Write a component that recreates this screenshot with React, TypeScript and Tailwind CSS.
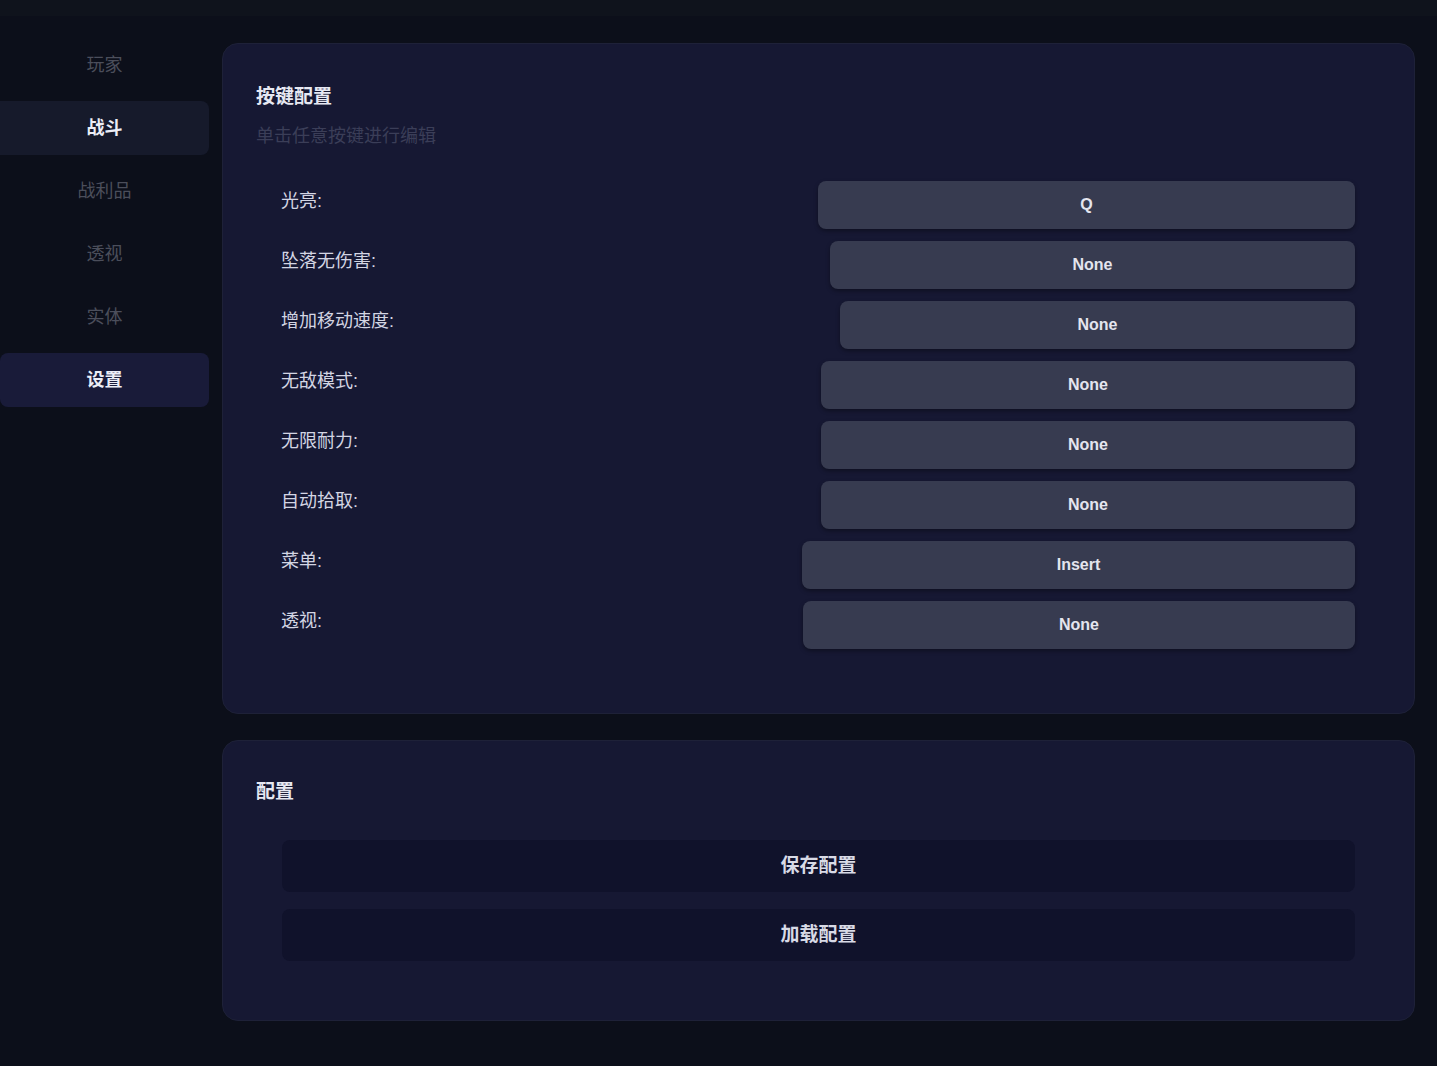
const NAV = [
  { label: "玩家", state: "idle" },
  { label: "战斗", state: "hover" },
  { label: "战利品", state: "idle" },
  { label: "透视", state: "idle" },
  { label: "实体", state: "idle" },
  { label: "设置", state: "active" },
];

const KEYS = [
  { name: "光亮:", key: "Q", w: "w-[537px]" },
  { name: "坠落无伤害:", key: "None", w: "w-[525px]" },
  { name: "增加移动速度:", key: "None", w: "w-[515px]" },
  { name: "无敌模式:", key: "None", w: "w-[534px]" },
  { name: "无限耐力:", key: "None", w: "w-[534px]" },
  { name: "自动拾取:", key: "None", w: "w-[534px]" },
  { name: "菜单:", key: "Insert", w: "w-[553px]" },
  { name: "透视:", key: "None", w: "w-[552px]" },
];

export default function App() {
  return (
    <div className="w-[1437px] h-[1066px] overflow-hidden bg-[#0c0f1a] font-['Liberation_Sans','Noto_Sans_CJK_SC',sans-serif] flex flex-col">
      <div className="h-[16px] bg-[#0f131c] shrink-0" />
      <div className="flex flex-1 pt-[22px]">
        <nav className="w-[209px] shrink-0 flex flex-col gap-[9px]">
          {NAV.map((n) => (
            <div
              key={n.label}
              className={`h-[54px] flex items-center justify-center text-[18px] rounded-r-lg ${
                n.state === "active"
                  ? "bg-[#191b39] text-[#eceef6] font-bold rounded-lg"
                  : n.state === "hover"
                  ? "bg-[#161a2b] text-[#eceef6] font-bold"
                  : "text-[#4b4e5b]"
              }`}
            >
              {n.label}
            </div>
          ))}
        </nav>
        <main className="ml-[13px] mt-[5px] w-[1193px] flex flex-col gap-[26px]">
          <section className="h-[671px] rounded-2xl bg-[#161833] border border-[#1e2138] pl-[33px] pr-[59px] pt-[40px]">
            <h2 className="text-[19px] font-bold text-[#e6e8f2] leading-[26px]">按键配置</h2>
            <p className="mt-[13px] text-[18px] text-[#3b3e58] leading-[26px]">单击任意按键进行编辑</p>
            <div className="mt-[32px] flex flex-col gap-[12px] pl-[25px]">
              {KEYS.map((k) => (
                <div key={k.name} className="flex items-center justify-between h-[48px]">
                  <span className="text-[18px] text-[#d3d5e3] leading-[26px] mb-[8px]">{k.name}</span>
                  <button
                    className={`${k.w} h-[48px] rounded-lg bg-[#373b50] text-[16px] font-bold text-[#e4e5ee] shadow-[0_2px_4px_rgba(0,0,0,0.35)]`}
                  >
                    {k.key}
                  </button>
                </div>
              ))}
            </div>
          </section>
          <section className="h-[281px] rounded-2xl bg-[#161833] border border-[#1e2138] pl-[33px] pr-[59px] pt-[38px]">
            <h2 className="text-[19px] font-bold text-[#e6e8f2] leading-[26px]">配置</h2>
            <div className="mt-[35px] ml-[26px] flex flex-col gap-[17px]">
              <button className="h-[52px] rounded-lg bg-[#10122b] text-[19px] font-bold text-[#d8dae6]">保存配置</button>
              <button className="h-[52px] rounded-lg bg-[#10122b] text-[19px] font-bold text-[#d8dae6]">加载配置</button>
            </div>
          </section>
        </main>
      </div>
    </div>
  );
}
